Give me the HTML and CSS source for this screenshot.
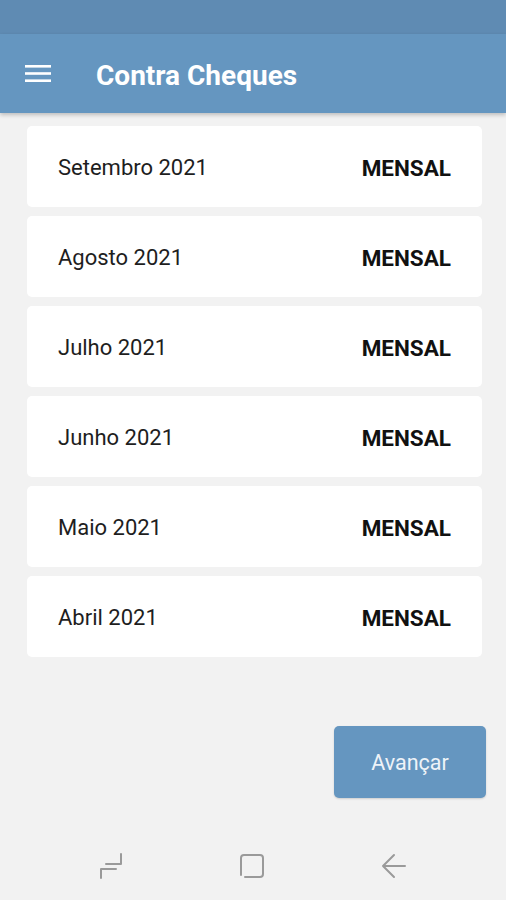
FILE: index.html
```html
<!DOCTYPE html>
<html lang="pt">
<head>
<meta charset="utf-8">
<title>Contra Cheques</title>
<link rel="stylesheet" href="styles.css">
</head>
<body>
<div class="screen">
  <div class="status-bar"></div>
  <header class="app-bar">
    <svg class="menu-icon" width="26" height="18" viewBox="0 0 26 18" aria-hidden="true">
      <rect x="0" y="0" width="26" height="2.6" fill="#fff"/>
      <rect x="0" y="7.2" width="26" height="2.6" fill="#fff"/>
      <rect x="0" y="14.4" width="26" height="2.6" fill="#fff"/>
    </svg>
    <h1 class="title">Contra Cheques</h1>
  </header>
  <main class="content">
    <ul class="list">
      <li class="card"><span class="month">Setembro 2021</span><span class="type">MENSAL</span></li>
      <li class="card"><span class="month">Agosto 2021</span><span class="type">MENSAL</span></li>
      <li class="card"><span class="month">Julho 2021</span><span class="type">MENSAL</span></li>
      <li class="card"><span class="month">Junho 2021</span><span class="type">MENSAL</span></li>
      <li class="card"><span class="month">Maio 2021</span><span class="type">MENSAL</span></li>
      <li class="card"><span class="month">Abril 2021</span><span class="type">MENSAL</span></li>
    </ul>
    <div class="actions">
      <button class="btn">Avançar</button>
    </div>
  </main>
  <nav class="nav-bar">
    <svg class="nav-icon" width="24" height="26" viewBox="0 0 24 26" aria-hidden="true">
      <path d="M22 1 V11 H7 M17 16 H2 V25" fill="none" stroke="#9a9a9a" stroke-width="2" stroke-linecap="round" stroke-linejoin="round"/>
    </svg>
    <svg class="nav-icon" width="26" height="26" viewBox="0 0 26 26" aria-hidden="true">
      <path d="M2 22 V5 Q2 2 5 2 H21 Q24 2 24 5 V21 Q24 24 21 24 H6" fill="none" stroke="#9a9a9a" stroke-width="2" stroke-linecap="round"/>
    </svg>
    <svg class="nav-icon" width="26" height="26" viewBox="0 0 26 26" aria-hidden="true">
      <path d="M13 2 L2 13 L13 24 M2 13 H24" fill="none" stroke="#9a9a9a" stroke-width="2" stroke-linecap="round" stroke-linejoin="round"/>
    </svg>
  </nav>
</div>
</body>
</html>
```

FILE: styles.css
```css
* { box-sizing: border-box; }
html, body { margin: 0; padding: 0; }
body {
  background: #f2f2f2;
  font-family: Roboto, "Liberation Sans", Arial, sans-serif;
}
.screen {
  width: 506px;
  height: 900px;
  display: flex;
  flex-direction: column;
  overflow: hidden;
}
.status-bar {
  height: 34px;
  background: #5f8bb3;
  flex: none;
}
.app-bar {
  height: 79px;
  background: #6596c0;
  display: flex;
  align-items: center;
  padding-left: 25px;
  gap: 45px;
  box-shadow: 0 2px 4px rgba(0,0,0,0.22);
  position: relative;
  z-index: 1;
  flex: none;
}
.menu-icon { display: block; margin-top: 1px; }
.title {
  margin: 3px 0 0 0;
  color: #fff;
  font-size: 28px;
  font-weight: 700;
  letter-spacing: 0;
}
.content {
  flex: 1;
  display: flex;
  flex-direction: column;
  padding: 13px 24px 0 27px;
}
.list {
  list-style: none;
  margin: 0;
  padding: 0;
  display: flex;
  flex-direction: column;
  gap: 9px;
}
.card {
  height: 81px;
  background: #fff;
  border-radius: 5px;
  display: flex;
  align-items: center;
  justify-content: space-between;
  padding: 2px 31px 0 31px;
}
.month {
  font-size: 22px;
  color: #1e1e1e;
}
.type {
  font-size: 22.5px;
  font-weight: 700;
  color: #111;
}
.actions {
  margin-top: auto;
  display: flex;
  justify-content: flex-end;
  margin-right: -4px;
  margin-bottom: 38px;
}
.btn {
  width: 152px;
  height: 72px;
  border: none;
  border-radius: 5px;
  background: #6596c0;
  color: #eef3f8;
  font-family: Roboto, "Liberation Sans", Arial, sans-serif;
  font-size: 21.5px;
  box-shadow: 0 1px 2px rgba(0,0,0,0.15);
}
.nav-bar {
  height: 64px;
  flex: none;
  display: flex;
  align-items: center;
  justify-content: space-between;
  padding: 0 99px 4px 99px;
}
.nav-icon { display: block; }
```
